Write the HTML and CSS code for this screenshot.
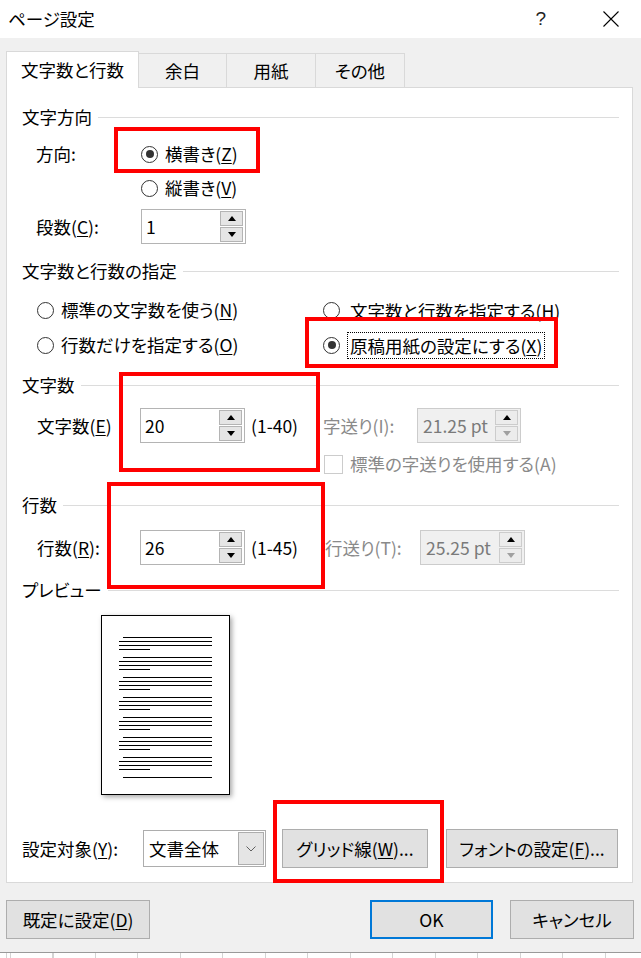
FILE: index.html
```html
<!DOCTYPE html>
<html lang="ja">

<head>
    <meta charset="utf-8">
    <meta name="viewport" content="width=device-width, initial-scale=1.0">
    <title>ページ設定</title>

    <link rel="stylesheet" href="styles.css">

</head>

<body>

    <header class="titlebar">
        <span class="titlebar_text">ページ設定</span>
        <span class="titlebar_help">?</span>
        <svg class="titlebar_close" width="16" height="16" viewBox="0 0 16 16">
            <path d="M0.5 0.5 L15.5 15.5 M15.5 0.5 L0.5 15.5" stroke="#000" stroke-width="1.1" fill="none" />
        </svg>
    </header>

    <div class="dialog">

        <nav class="tabs">
            <div class="tab tab_active">文字数と行数</div>
            <div class="tab tab_margin">余白</div>
            <div class="tab tab_paper">用紙</div>
            <div class="tab tab_other">その他</div>
        </nav>

        <section class="panel">

            <div class="group_head"><span>文字方向</span><i></i></div>

            <div class="row row_dir">
                <span class="lbl">方向:</span>
                <label class="opt"><span class="radio on"></span>横書き(<u>Z</u>)</label>
            </div>
            <div class="row row_tate">
                <label class="opt"><span class="radio"></span>縦書き(<u>V</u>)</label>
            </div>
            <div class="row row_dan">
                <span class="lbl">段数(<u>C</u>):</span>
                <div class="spin">
                    <span class="spin_val">1</span>
                    <span class="spin_btns"><i class="up"></i><i class="down"></i></span>
                </div>
            </div>

            <div class="group_head head_spec"><span>文字数と行数の指定</span><i></i></div>

            <div class="row row_r1">
                <label class="opt col_left"><span class="radio"></span>標準の文字数を使う(<u>N</u>)</label>
                <label class="opt"><span class="radio"></span><span class="ftext">文字数と行数を指定する(<u>H</u>)</span></label>
            </div>
            <div class="row row_r2">
                <label class="opt col_left"><span class="radio"></span>行数だけを指定する(<u>O</u>)</label>
                <label class="opt"><span class="radio on"></span><span class="ftext focused">原稿用紙の設定にする(<u>X</u>)</span></label>
            </div>

            <div class="group_head head_chars"><span>文字数</span><i></i></div>

            <div class="row row_num">
                <span class="lbl lbl_num">文字数(<u>E</u>)</span>
                <div class="spin">
                    <span class="spin_val">20</span>
                    <span class="spin_btns"><i class="up"></i><i class="down"></i></span>
                </div>
                <span class="range range_chars">(1-40)</span>
                <span class="dim_lbl pitch_chars">字送り(I):</span>
                <div class="spin spin_off spin_chars">
                    <span class="spin_val">21.25 pt</span>
                    <span class="spin_btns"><i class="up"></i><i class="down"></i></span>
                </div>
            </div>
            <div class="row row_check">
                <span class="check"></span>
                <span class="dim_lbl">標準の字送りを使用する(A)</span>
            </div>

            <div class="group_head head_lines"><span>行数</span><i></i></div>

            <div class="row row_num row_lines">
                <span class="lbl lbl_num">行数(<u>R</u>):</span>
                <div class="spin">
                    <span class="spin_val">26</span>
                    <span class="spin_btns"><i class="up"></i><i class="down"></i></span>
                </div>
                <span class="range range_lines">(1-45)</span>
                <span class="dim_lbl pitch_lines">行送り(T):</span>
                <div class="spin spin_off spin_lines">
                    <span class="spin_val">25.25 pt</span>
                    <span class="spin_btns"><i class="up"></i><i class="down"></i></span>
                </div>
            </div>

            <div class="group_head head_preview"><span>プレビュー</span><i></i></div>

            <div class="preview">
                <svg width="129" height="180" viewBox="0 0 129 180" shape-rendering="crispEdges">
                    <rect x="0.5" y="0.5" width="128" height="179" fill="#fff" stroke="#000" />
                    <g stroke="#000" stroke-width="1">
                        <path d="M22 22.5H111M18 26.5H111M18 30.5H111M18 34.5H49" />
                        <path d="M22 42.5H111M18 46.5H111M18 50.5H111M18 54.5H49" />
                        <path d="M22 62.5H111M18 66.5H111M18 70.5H111M18 74.5H49" />
                        <path d="M22 82.5H111M18 86.5H111M18 90.5H111M18 94.5H49" />
                        <path d="M22 102.5H111M18 106.5H111M18 110.5H111M18 114.5H49" />
                        <path d="M22 122.5H111M18 126.5H111M18 130.5H111M18 134.5H49" />
                        <path d="M22 142.5H111M18 146.5H111M18 150.5H111M18 154.5H49" />
                        <path d="M22 162.5H111" />
                    </g>
                </svg>
            </div>

            <div class="row row_bottom">
                <span class="lbl lbl_target">設定対象(<u>Y</u>):</span>
                <div class="select">
                    <span>文書全体</span>
                    <span class="select_btn">
                        <svg width="10" height="6" viewBox="0 0 10 6">
                            <path d="M0.5 0.5 L5 5 L9.5 0.5" stroke="#606060" fill="none" />
                        </svg>
                    </span>
                </div>
                <div class="btn btn_grid">グリッド線(<u>W</u>)...</div>
                <div class="btn btn_font">フォントの設定(<u>F</u>)...</div>
            </div>

            <!-- red annotation frames -->
            <div class="mark mark_dir"></div>
            <div class="mark mark_genko"></div>
            <div class="mark mark_chars"></div>
            <div class="mark mark_lines"></div>
            <div class="mark mark_grid"></div>

        </section>

        <div class="actions">
            <div class="btn btn_default">既定に設定(<u>D</u>)</div>
            <div class="btn btn_ok">OK</div>
            <div class="btn btn_cancel">キャンセル</div>
        </div>

    </div>

    <div class="sheet"></div>

</body>

</html>
```

FILE: styles.css
```css
body {
    margin: 0;
    width: 641px;
    height: 958px;
    overflow: hidden;
    background: #fff;
    color: #000;
    font-family: "Noto Sans CJK JP", sans-serif;
    font-size: 17.5px;
    line-height: 20px;
    font-feature-settings: "palt";
}

u {
    text-decoration-thickness: 1px;
    text-underline-offset: 2px;
}

/* title bar */

.titlebar {
    height: 38px;
    display: flex;
    align-items: center;
    padding-left: 8px;
    background: #fff;
}

.titlebar_help {
    margin-left: auto;
    margin-right: 57px;
    font-family: "Liberation Sans", sans-serif;
    font-size: 19px;
    color: #222;
}

.titlebar_close {
    margin-right: 22px;
}

/* dialog */

.dialog {
    height: 914px;
    box-sizing: border-box;
    background: #f0f0f0;
    padding: 13px 8px 0 6px;
}

.tabs {
    display: flex;
    align-items: flex-end;
    height: 36px;
}

.tab {
    height: 34px;
    box-sizing: border-box;
    border: 1px solid #d9d9d9;
    border-left: none;
    border-bottom: none;
    background: #f0f0f0;
    display: flex;
    align-items: center;
    justify-content: center;
}

.tab_active {
    width: 133px;
    height: 37px;
    margin-bottom: -1px;
    border-left: 1px solid #d9d9d9;
    background: #fff;
    position: relative;
    z-index: 1;
}

.tab_margin {
    width: 88px;
}

.tab_paper {
    width: 89px;
}

.tab_other {
    width: 89px;
}

.panel {
    height: 796px;
    box-sizing: border-box;
    background: #fff;
    border: 1px solid #d9d9d9;
    padding: 19px 13px 0 15px;
    position: relative;
}

.group_head {
    display: flex;
    align-items: center;
    height: 20px;
}

.group_head i {
    flex: 1;
    height: 1px;
    margin-left: 6px;
    background: #dcdcdc;
}

.row {
    display: flex;
    align-items: center;
}

.lbl {
    width: 105px;
    flex: none;
}

.opt {
    display: flex;
    align-items: center;
}

.radio {
    width: 17px;
    height: 17px;
    box-sizing: border-box;
    border: 1px solid #333;
    border-radius: 50%;
    background: #fff;
    display: flex;
    align-items: center;
    justify-content: center;
    margin-right: 7px;
    flex: none;
}

.radio.on::after {
    content: "";
    width: 8px;
    height: 8px;
    border-radius: 50%;
    background: #333;
}

/* rows, top to bottom */

.row_dir {
    margin-top: 12px;
    height: 30px;
    padding-left: 14px;
}

.row_tate {
    margin-top: 4px;
    height: 30px;
    padding-left: 119px;
}

.row_dan {
    margin-top: 6px;
    height: 35px;
    padding-left: 14px;
}

.head_spec {
    margin-top: 17px;
}

.row_r1 {
    margin-top: 14px;
    height: 30px;
    padding-left: 15px;
}

.row_r2 {
    margin-top: 5px;
    height: 30px;
    padding-left: 15px;
}

.col_left {
    width: 286px;
    flex: none;
}

.ftext {
    border: 1px dotted transparent;
    padding: 3px 2px;
    line-height: 19px;
}

.ftext.focused {
    border-color: #000;
}

.head_chars {
    margin-top: 15px;
}

.row_num {
    margin-top: 13px;
    height: 35px;
    padding-left: 15px;
}

.lbl_num {
    width: 103px;
}

.range {
    margin-left: 6px;
    flex: none;
}

.range_chars {
    width: 72px;
}

.range_lines {
    width: 74px;
}

.dim_lbl {
    color: #8a8a8a;
    flex: none;
}

.pitch_chars {
    width: 94px;
}

.pitch_lines {
    width: 95px;
}

.row_check {
    margin-top: 11px;
    height: 20px;
    padding-left: 302px;
}

.check {
    width: 19px;
    height: 19px;
    box-sizing: border-box;
    border: 1px solid #cccccc;
    background: #fff;
    margin-right: 7px;
}

.head_lines {
    margin-top: 21px;
}

.row_lines {
    margin-top: 15px;
}

.head_preview {
    margin-top: 15px;
}

/* spin boxes */

.spin {
    width: 105px;
    height: 35px;
    box-sizing: border-box;
    border: 1px solid #b4b4b4;
    background: #fff;
    display: flex;
    align-items: center;
    padding: 0 2px 0 4px;
    flex: none;
}

.spin_val {
    flex: 1;
    white-space: nowrap;
}

.spin_btns {
    display: flex;
    flex-direction: column;
    gap: 1px;
    width: 23px;
}

.spin_btns i {
    height: 15px;
    box-sizing: border-box;
    border: 1px solid #b4b4b4;
    background: #e5e5e5;
    display: flex;
    align-items: center;
    justify-content: center;
}

.spin_btns .up::after {
    content: "";
    border-left: 4.5px solid transparent;
    border-right: 4.5px solid transparent;
    border-bottom: 5px solid #000;
}

.spin_btns .down::after {
    content: "";
    border-left: 4.5px solid transparent;
    border-right: 4.5px solid transparent;
    border-top: 5px solid #000;
}

.spin_off {
    background: #f0f0f0;
    border-color: #cccccc;
    color: #7a7a7a;
    padding-left: 5px;
}

.spin_off .spin_btns i {
    border-color: #cccccc;
    background: #ececec;
}

.spin_off .spin_btns .down::after {
    border-top-color: #a0a0a0;
}

.spin_chars {
    width: 104px;
}

/* preview page */

.preview {
    margin: 15px 0 0 79px;
    width: 129px;
    height: 180px;
    box-shadow: 2px 2px 5px rgba(0, 0, 0, .35);
}

.preview svg {
    display: block;
}

/* bottom row */

.row_bottom {
    margin-top: 34px;
    height: 39px;
}

.lbl_target {
    width: 121px;
}

.select {
    width: 123px;
    height: 37px;
    box-sizing: border-box;
    border: 1px solid #adadad;
    background: #fff;
    display: flex;
    align-items: center;
    padding-left: 5px;
}

.select_btn {
    margin-left: auto;
    margin-right: 1px;
    width: 26px;
    height: 33px;
    box-sizing: border-box;
    border: 1px solid #adadad;
    background: #e5e5e5;
    display: flex;
    align-items: center;
    justify-content: center;
}

.btn {
    height: 39px;
    box-sizing: border-box;
    border: 1px solid #adadad;
    background: #e1e1e1;
    display: flex;
    align-items: center;
    justify-content: center;
    flex: none;
}

.btn_grid {
    width: 146px;
    margin-left: 16px;
}

.btn_font {
    width: 172px;
    margin-left: 18px;
}

/* red annotation frames */

.mark {
    position: absolute;
    box-sizing: border-box;
    border: 4px solid #ff0000;
}

.mark_dir {
    left: 107px;
    top: 39px;
    width: 146px;
    height: 46px;
}

.mark_genko {
    left: 298px;
    top: 229px;
    width: 253px;
    height: 51px;
}

.mark_chars {
    left: 112px;
    top: 284px;
    width: 201px;
    height: 100px;
}

.mark_lines {
    left: 100px;
    top: 394px;
    width: 218px;
    height: 107px;
}

.mark_grid {
    left: 266px;
    top: 712px;
    width: 171px;
    height: 83px;
}

/* dialog buttons */

.actions {
    display: flex;
    margin-top: 17px;
}

.btn_default {
    width: 144px;
}

.btn_ok {
    width: 123px;
    margin-left: auto;
    border: 2px solid #0078d7;
}

.btn_cancel {
    width: 124px;
    margin-left: 17px;
    margin-right: -1px;
}

/* spreadsheet strip below the dialog */

.sheet {
    height: 5px;
    border-top: 1px solid #9a9a9a;
    background-image: repeating-linear-gradient(90deg, #d4d4d4 0, #d4d4d4 1px, transparent 1px, transparent 42.5px);
    background-position: 10px 0;
}
```
